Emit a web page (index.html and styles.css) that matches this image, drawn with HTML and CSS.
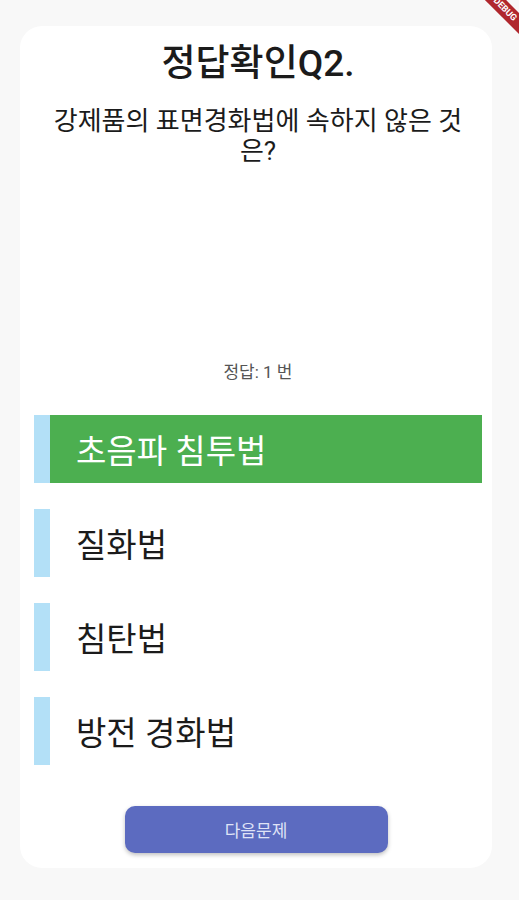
FILE: index.html
```html
<!DOCTYPE html>
<html lang="ko">
<head>
  <meta charset="UTF-8">
  <meta name="viewport" content="width=device-width, initial-scale=1.0">
  <title>정답확인</title>
  <link rel="stylesheet" href="styles.css">
</head>
<body>
  <div class="debug-banner"><span>DEBUG</span></div>
  <div class="card">
    <h1 class="title">정답확인Q2.</h1>
    <p class="question">강제품의 표면경화법에 속하지 않은 것<br>은?</p>
    <div class="picture"></div>
    <p class="answer">정답: 1 번</p>
    <div class="options">
      <div class="option correct"><span class="mark"></span><span class="label">초음파 침투법</span></div>
      <div class="option"><span class="mark"></span><span class="label">질화법</span></div>
      <div class="option"><span class="mark"></span><span class="label">침탄법</span></div>
      <div class="option"><span class="mark"></span><span class="label">방전 경화법</span></div>
    </div>
    <div class="actions">
      <button class="next-button">다음문제</button>
    </div>
  </div>
</body>
</html>
```

FILE: styles.css
```css
body {
  font-family: Roboto, "Noto Sans CJK KR", sans-serif; margin: 0; background-color: #f8f8f8;
  color: #1b1b1b; overflow: hidden; }
.card {
  width: 472px; margin: 26px 0 0 20px; background: white; border-radius: 22px;
  padding: 16px 10px 14px 14px; box-sizing: border-box; height: 842px; }
.title {
  margin: 0; font-size: 37px; font-weight: 500; line-height: 44px; text-align: center; }
.question {
  margin: 20px 0 0; font-size: 26px; line-height: 30px; text-align: center; }
.picture {
  height: 195px; }
.answer {
  margin: 0; font-size: 17px; color: #555; text-align: center; line-height: 22px; }
.options {
  display: flex; flex-direction: column; gap: 26px; margin-top: 32px; }
.option {
  display: flex; height: 68px; align-items: center; }
.mark {
  width: 16px; height: 100%; background-color: #b3e0f7; }
.label {
  flex: 1; height: 100%; display: flex; align-items: center; padding-left: 26px;
  font-size: 33px; color: #1b1b1b; }
.correct .label {
  background-color: #4caf50; color: white; }
.actions {
  display: flex; justify-content: center; margin-top: 41px; padding-right: 4px; }
.next-button {
  width: 263px; height: 47px; border: none; border-radius: 10px; background-color: #5c6bc0;
  color: #dfe3f6; font-family: Roboto, "Noto Sans CJK KR", sans-serif; font-size: 17px;
  box-shadow: 0 2px 4px rgba(0, 0, 0, 0.25); cursor: pointer; }
.debug-banner {
  position: absolute; top: 0; right: 0; width: 60px; height: 60px; overflow: hidden; }
.debug-banner span {
  position: absolute; top: 2px; right: -36px; width: 100px; height: 15px; transform: rotate(45deg);
  background-color: #b0272d; color: white; font-size: 9px; font-weight: bold; text-align: center;
  line-height: 15px; }
```
